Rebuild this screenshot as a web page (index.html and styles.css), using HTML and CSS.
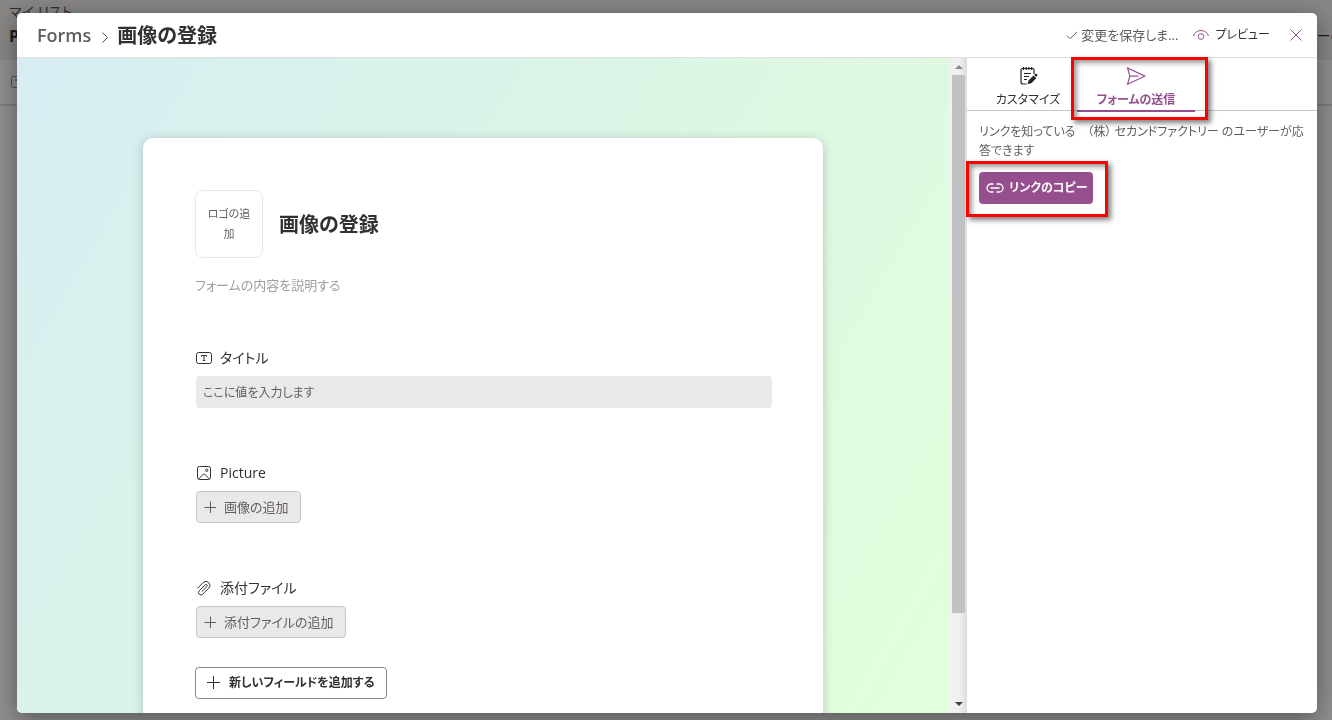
FILE: index.html
```
<!DOCTYPE html>
<html lang="ja">
<head>
    <meta charset="UTF-8">
    <title>Forms - 画像の登録</title>
    <link rel="stylesheet" href="styles.css">
</head>
<body>

    <div class="page">
        <div class="page-head">
            <div class="page-path">マイ リスト</div>
            <div class="page-title"><span>P</span><span class="page-user">ーの</span></div>
        </div>
        <div class="page-toolbar">
            <svg width="16" height="16" viewBox="0 0 16 16" fill="none" stroke="#2f5573"><rect x="1.500" y="2.500" width="13" height="11" rx="2"/><path d="M5 6h5"/></svg>
        </div>
    </div>

    <div class="dialog" role="dialog" aria-label="Forms">
        <header class="dialog-header">
            <a class="crumb" href="#">Forms</a>
            <svg class="chevron" width="8" height="12" viewBox="0 0 8 12" fill="none" stroke="#484644"><path d="M1.500 1.500L6.500 6.500L1.500 11.500"/></svg>
            <h1>画像の登録</h1>
            <div class="saved">
                <svg width="12" height="12" viewBox="0 0 12 12" fill="none" stroke="#605e5c"><path d="M1 6.500L4.200 9.700L11 2.800"/></svg>
                <span>変更を保存しま...</span>
            </div>
            <button class="preview">
                <svg width="16" height="16" viewBox="0 0 16 16" fill="none" stroke="#964f8e"><path d="M.5 9C1.500 5.500 4.500 3.500 8 3.500S14.500 5.500 15.500 9"/><circle cx="8" cy="9.500" r="2.800"/></svg>
                プレビュー
            </button>
            <button class="close" aria-label="閉じる">
                <svg width="12" height="12" viewBox="0 0 12 12" fill="none" stroke="#8a4a84"><path d="M.5 .5L11.500 11.500M11.500 .5L.5 11.500"/></svg>
            </button>
        </header>

        <div class="dialog-body">
            <main class="canvas">
                <form class="card">
                    <div class="card-head">
                        <button type="button" class="logo">ロゴの追加</button>
                        <h2>画像の登録</h2>
                    </div>
                    <p class="description">フォームの内容を説明する</p>

                    <div class="field">
                        <label for="titleInput">
                            <svg width="16" height="16" viewBox="0 0 16 16" fill="none" stroke="#323130"><rect x=".5" y="2.500" width="15" height="11" rx="2"/><path d="M5.500 6.800V5.500h5v1.300M8 5.500v5M6.800 10.500h2.400"/></svg>
                            タイトル
                        </label>
                        <input type="text" id="titleInput" placeholder="ここに値を入力します">
                    </div>

                    <div class="field">
                        <label for="pictureBtn">
                            <svg width="16" height="16" viewBox="0 0 16 16" fill="none" stroke="#323130"><rect x="1.500" y="1.500" width="13" height="13" rx="2"/><circle cx="10.700" cy="5.300" r="1.200"/><path d="M2.500 14L7.300 9.200q.7-.6 1.400 0L13.500 14"/></svg>
                            Picture
                        </label>
                        <button type="button" id="pictureBtn" class="attach">
                            <svg width="12" height="12" viewBox="0 0 12 12" stroke="#605e5c"><path d="M6.500 .5v12M.5 6.500h12"/></svg>
                            画像の追加
                        </button>
                    </div>

                    <div class="field">
                        <label for="fileBtn">
                            <svg width="16" height="16" viewBox="0 0 16 16" fill="none" stroke="#323130"><path d="M1.500 8.300L7.200 2.600a3.900 3.900 0 0 1 5.600 5.500L6.700 14.200a2.400 2.400 0 0 1-3.500-3.400L9.200 4.800a1.200 1.200 0 0 1 1.700 1.700L5.700 11.700"/></svg>
                            添付ファイル
                        </label>
                        <button type="button" id="fileBtn" class="attach">
                            <svg width="12" height="12" viewBox="0 0 12 12" stroke="#605e5c"><path d="M6.500 .5v12M.5 6.500h12"/></svg>
                            添付ファイルの追加
                        </button>
                    </div>

                    <button type="button" class="add-field">
                        <svg width="14" height="14" viewBox="0 0 14 14" stroke="#323130"><path d="M6.500 0v13M0 6.500h13"/></svg>
                        新しいフィールドを追加する
                    </button>
                </form>
            </main>

            <div class="scrollbar">
                <svg width="8" height="4" viewBox="0 0 8 4" fill="#8a8a8a"><path d="M0 4L4 0L8 4z"/></svg>
                <div class="thumb"></div>
                <svg width="8" height="4" viewBox="0 0 8 4" fill="#404040"><path d="M0 0L4 4L8 0z"/></svg>
            </div>

            <aside class="panel">
                <nav class="tabs">
                    <button class="tab">
                        <svg width="20" height="20" viewBox="0 0 20 20" fill="none" stroke="#242424" stroke-width="1.200"><path d="M8.500 18H5q-2 0-2-2V4q0-1.500 1.500-1.500h10Q16 2.500 16 4v4M5.500 1v3M8.200 1v3M10.900 1v3M13.600 1v3M6 7.500h7M6 10.500h5M6 13.500h3"/><path fill="#242424" stroke="none" d="M9.500 18.300l1-3.800 5-5 2.800 2.800-5 5zM16.200 8.800l1-.9q1.200-.6 1.900.2.800 1-.1 2l-.9.800z"/></svg>
                        カスタマイズ
                    </button>
                    <div class="marked">
                        <button class="tab active">
                            <svg width="20" height="20" viewBox="0 0 20 20" fill="none" stroke="#964f8e" stroke-width="1.200"><path d="M1.600 2L18.800 10.200L1.600 18.200L3.800 10.200zM3.800 10.200H12.500"/></svg>
                            フォームの送信
                        </button>
                        <span class="highlight highlight-tab"></span>
                    </div>
                </nav>
                <div class="share">
                    <p>リンクを知っている　（株） セカンドファクトリー のユーザーが応答できます</p>
                    <div class="marked">
                        <button class="copy">
                            <svg width="18" height="16" viewBox="0 0 18 16" fill="none" stroke="#fff" stroke-width="1.300"><path d="M7.500 4H5a4 4 0 0 0 0 8h2.500M10.500 4H13a4 4 0 0 1 0 8h-2.500M4.500 8h9"/></svg>
                            リンクのコピー
                        </button>
                        <span class="highlight highlight-copy"></span>
                    </div>
                </div>
            </aside>
        </div>
    </div>

</body>
</html>
```
FILE: styles.css
```
* {
    margin: 0;
    padding: 0;
    box-sizing: border-box;
}

body {
    height: 100vh;
    overflow: hidden;
    background: #8f8f8f;
    color: #323130;
    font-family: "Open Sans", "Noto Sans CJK JP", sans-serif;
    font-feature-settings: "palt";
    font-size: 13px;
    line-height: 20px;
}

button,
input {
    font: inherit;
    font-feature-settings: inherit;
    color: inherit;
    border: 0;
    background: none;
}

button {
    cursor: pointer;
    white-space: nowrap;
}

svg {
    flex: none;
}

/* list page behind the dialog */
.page-head {
    height: 60px;
    padding: 2px 0 0 9px;
    background: #878684;
    overflow: hidden;
}

.page-path {
    font-size: 14px;
}

.page-title {
    display: flex;
    justify-content: space-between;
    padding-top: 4px;
    font-size: 16px;
    font-weight: 700;
    color: #1b1a19;
}

.page-user {
    margin-right: -12px;
    font-size: 14px;
    font-weight: 400;
}

.page-toolbar {
    height: 46px;
    padding: 14px 10px;
    border-bottom: 2px solid #7c7c7c;
}

.dialog {
    position: fixed;
    inset: 13px 15px 7px 17px;
    display: flex;
    flex-direction: column;
    background: #fff;
    border-radius: 5px;
    box-shadow: 0 6px 24px rgba(0, 0, 0, 0.4);
    overflow: hidden;
}

.dialog-header {
    display: flex;
    align-items: center;
    flex: none;
    height: 45px;
    padding: 0 15px 0 20px;
    border-bottom: 1px solid #e1dfdd;
}

.crumb {
    font-size: 18px;
    font-weight: 600;
    color: #605e5c;
    text-decoration: none;
}

.chevron {
    margin: 4px 8px 0 10px;
}

h1,
h2 {
    padding-top: 2px;
    font-size: 20px;
    font-weight: 600;
    line-height: 28px;
}

.saved {
    display: flex;
    align-items: center;
    gap: 3px;
    margin-left: auto;
    color: #605e5c;
}

.preview {
    display: flex;
    align-items: center;
    gap: 6px;
    margin: 0 20px 0 15px;
    font-size: 12px;
}

.close {
    display: flex;
}

.dialog-body {
    display: flex;
    flex: 1;
    min-height: 0;
}

.canvas {
    flex: 1;
    padding: 80px 41px 0 40px;
    background: linear-gradient(120deg, #d7edf3, #daf3e9 35%, #dff9e1 70%, #e2ffdb);
    overflow: hidden;
}

.card {
    max-width: 680px;
    min-height: 100%;
    margin: 0 auto;
    padding: 52px;
    background: #fff;
    border-radius: 10px;
    box-shadow: 0 2px 12px rgba(0, 0, 0, 0.2);
}

.card-head {
    display: flex;
    align-items: center;
    gap: 16px;
}

.logo {
    width: 68px;
    height: 68px;
    padding: 0 10px;
    border: 1px solid #e8e8e8;
    border-radius: 8px;
    font-size: 11px;
    color: #605e5c;
    white-space: normal;
}

.description {
    margin: 17px 0 53px;
    color: #a19f9d;
}

.field {
    margin: 0 -1px 55px 1px;
}

.field label {
    display: flex;
    align-items: center;
    gap: 8px;
    margin-bottom: 8px;
    font-size: 14px;
}

.field input {
    display: block;
    width: 100%;
    height: 32px;
    padding: 0 7px;
    background: #ebe9e8;
    border-radius: 4px;
    font-size: 12px;
}

.field input::placeholder {
    color: #605e5c;
}

.attach,
.add-field {
    display: flex;
    align-items: center;
    gap: 8px;
    height: 32px;
    padding: 0 11px 0 7px;
    background: #ebe9e8;
    border: 1px solid #c8c6c4;
    border-radius: 4px;
    color: #605e5c;
}

.add-field {
    margin-top: -26px;
    padding: 0 11px;
    background: #fff;
    border-color: #8a8886;
    color: #323130;
    font-size: 12px;
    font-weight: 600;
}

.scrollbar {
    display: flex;
    flex-direction: column;
    align-items: center;
    flex: none;
    width: 17px;
    padding: 7px 0;
    background: linear-gradient(90deg, #f1f1f1 50%, #dcdcdc);
}

.thumb {
    width: 13px;
    height: 84%;
    margin: 6px 0 auto;
    background: #c1c1c1;
}

.panel {
    flex: none;
    width: 350px;
}

.tabs {
    display: flex;
    height: 53px;
    padding-left: 12px;
    border-bottom: 1px solid #c8c6c4;
}

.tab {
    display: flex;
    flex-direction: column;
    align-items: center;
    gap: 4px;
    min-width: 98px;
    height: 54px;
    padding-top: 8px;
    font-size: 12px;
}

.active {
    min-width: 118px;
    border-bottom: 2px solid #964f8e;
    color: #964f8e;
    font-weight: 600;
}

.share {
    padding: 11px 12px;
    color: #605e5c;
    font-size: 12px;
}

.share p {
    margin-bottom: 12px;
    line-height: 19px;
}

.marked {
    position: relative;
    width: fit-content;
}

.copy {
    display: flex;
    align-items: center;
    gap: 5px;
    height: 32px;
    padding: 0 5px 0 7px;
    background: #964f8e;
    border-radius: 4px;
    color: #fff;
    font-weight: 700;
}

/* red call-outs over the controls */
.highlight {
    position: absolute;
    border: 3px solid #f00;
    box-shadow: 3px 3px 5px rgba(0, 0, 0, 0.5), inset 3px 3px 5px rgba(0, 0, 0, 0.4);
    pointer-events: none;
}

.highlight-tab {
    inset: -1px -13px -10px -6px;
}

.highlight-copy {
    inset: -11px -15px -13px -13px;
}
```
